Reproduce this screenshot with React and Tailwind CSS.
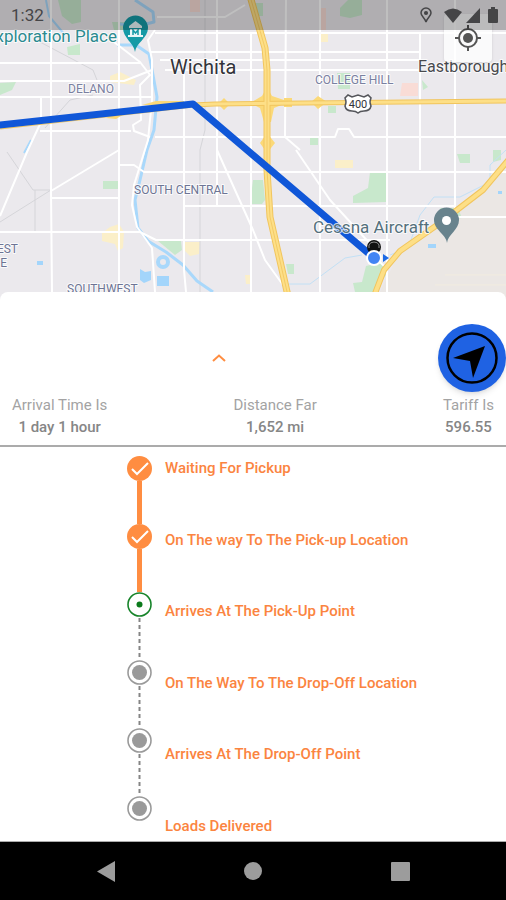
import { useState } from "react";
import clsx from "clsx";

const STATS = [
    { label: "Arrival Time Is", value: "1 day 1 hour" },
    { label: "Distance Far", value: "1,652 mi" },
    { label: "Tariff Is", value: "596.55" },
];

const STEPS = [
    { label: "Waiting For Pickup", status: "done" },
    { label: "On The way To The Pick-up Location", status: "done" },
    { label: "Arrives At The Pick-Up Point", status: "current" },
    { label: "On The Way To The Drop-Off Location", status: "pending" },
    { label: "Arrives At The Drop-Off Point", status: "pending" },
    { label: "Loads Delivered", status: "pending" },
];

const STREETS = [
    // east - west
    "M0 63H140", "M0 81H124L152 70", "M0 97H152", "M40 131H131", "M155 33H506", "M150 52H420", "M160 60H420",
    "M165 70H420", "M155 137H335L338 129H349L354 137H506", "M119 165H134L144 172H506", "M52 198H119",
    "M184 206H455", "M0 232H140L156 240H390", "M450 217H506", "M157 17H225L245 5",
    // north - south
    "M51 0V191L52 292", "M119 0V292", "M184 60V270L186 292", "M217 0V205", "M251 32V292", "M286 0L285 137L300 150",
    "M320 0V292", "M387 0V292", "M420 33V170", "M455 0V210",
    "M41 97V122L27 152L0 216", "M51 191L119 150", "M217 150L253 230L265 260L283 285", "M296 150L330 200L373 247",
    "M114 42L140 62L150 75L140 85L141 120L133 125L134 131L150 137",
    "M155 30L148 40L152 60V100L148 140L134 185L132 205L137 227L152 248L155 292", "M376 258L386 268",
];

const RAILS = [
    "M205 0V130L200 150V292", "M40 42L93 70L97 80", "M93 95L70 100L45 128", "M7 152L33 190L51 190",
    "M51 190L0 222", "M35 190V232",
];

const RIVER = "M135 0L153 12L154 22L138 26L120 24M117 45L136 45L149 54L153 75L157 97L154 130L147 150L140 180L135 200L138 228L148 241L166 252L183 265L197 281L213 292";

const PARKS = [
    "M58 0H81V22L72 24L62 16Z", "M67 47L80 44V55H68Z", "M0 83L16 82L12 90L0 95Z", "M112 22H126V30H114Z",
    "M340 8L348 0H362V15L350 18L340 16Z", "M103 181H118V189H103Z", "M158 241H181L182 250L175 255Z",
    "M253 180L263 180L265 200L262 204H250Z", "M370 172H386V202L353 203V196L368 188Z", "M457 154H470V163H460Z",
    "M493 150H501V160L493 162Z", "M337 73H350V89H338Z", "M422 80L428 87L423 90Z", "M366 266L382 262L388 272L374 292H355L353 283L362 282Z",
    "M328 106H336V113H328Z", "M310 138H318V145H310Z", "M286 264H294V274H288Z", "M440 208H458L462 218L446 220Z", "M253 3H263V16H254Z",
];

const SANDS = [
    "M102 233L110 227L119 224L124 232L123 248L118 251L115 244L102 241Z", "M184 242H200L199 254L190 256L184 250Z",
    "M110 76L120 72L136 80L134 85L110 82Z", "M335 160H353V168H335Z", "M320 34H328V42H320Z", "M245 275H251V284H246Z",
];

const LABELS = [
    { text: "Exploration Place", x: 117, y: 42, size: 17, anchor: "end", color: "#2c8a90" },
    { text: "Wichita", x: 170, y: 74, size: 20, color: "#33343a" },
    { text: "DELANO", x: 68, y: 93, size: 12, color: "#7a80a0" },
    { text: "COLLEGE HILL", x: 315, y: 84, size: 12, color: "#7a80a0" },
    { text: "Eastborough", x: 418, y: 72, size: 16, color: "#48494e" },
    { text: "SOUTH CENTRAL", x: 134, y: 194, size: 12, color: "#6d7494" },
    { text: "EST", x: 18, y: 253, size: 12, anchor: "end", color: "#6d7494" },
    { text: "E", x: 7, y: 267, size: 12, anchor: "end", color: "#6d7494" },
    { text: "SOUTHWEST", x: 67, y: 293, size: 12, color: "#6d7494" },
    { text: "Cessna Aircraft", x: 313, y: 233, size: 17, color: "#54707c" },
];

function RouteMap() {
    const route = "M-4 125.500L193 104L374 258";
    const freeway = "M250 -4L265 48L267 70V170L270 217L288 296";
    const diagonal = "M510 158L483 190L440 223L400 251L384 270L374 296";

    return (
        <svg viewBox="0 0 506 304" preserveAspectRatio="xMidYMid slice" className="block h-full w-full" aria-label="Route map">
            <rect width="506" height="304" fill="#ebe9ed" />
            <path d="M506 170L440 223L400 251L374 304H506Z" fill="#ebe7e4" />
            <g fill="#c8e8cc">{PARKS.map(d => <path key={d} d={d} />)}</g>
            <g fill="#fbefc9">{SANDS.map(d => <path key={d} d={d} />)}</g>
            <path d="M402 83H418V96H400ZM190 0H200V12H190ZM321 8H326V30H321Z" fill="#f9dcd6" />
            <g fill="none" stroke="#d5d5d9">{RAILS.map(d => <path key={d} d={d} />)}</g>
            <g fill="none" stroke="#a9d8fb" strokeLinejoin="round">
                <path d={RIVER} strokeWidth="3" />
                <path d="M46 0L49 16L65 35M31 140L24 153" strokeWidth="2" />
                <path d="M285 284H310L345 258L362 255M390 255L408 248L420 215L434 197H460L490 182V165L506 150" strokeWidth="1" stroke="#c2e0f5" />
                <circle cx="163" cy="262" r="5" strokeWidth="4" />
            </g>
            <path d="M140 269L145 272L151 271V280L144 283L140 280ZM157 276H169V286H157ZM37 261H43V265H37ZM428 244H436V248H428ZM498 191H502V194H498Z" fill="#a3d5fb" />
            <g fill="none" stroke="#ffffff" strokeWidth="2" strokeLinejoin="round">{STREETS.map(d => <path key={d} d={d} />)}</g>
            <path d="M445 275H506M435 285H506" stroke="#f2ecdf" />

            {/* Highways */}
            <g fill="#fbd978">
                <path d="M267 87L272 96L284 100V104L274 108L271 122H264L260 108L250 103L262 96Z" />
                <path d="M267 133L275 143L267 153L260 143ZM218 104L224 98L230 104L224 110ZM311 102L318 96L327 102L318 109ZM284 98H292V107H284Z" />
                <path d="M106 118L118 113H126L116 119ZM142 105L156 101H184V105Z" />
            </g>
            <g fill="none" strokeLinejoin="round">
                <g stroke="#f1c55e">
                    <path d="M0 127L193 105L215 104L506 101" strokeWidth="5" />
                    <path d={freeway} strokeWidth="7" />
                    <path d={diagonal} strokeWidth="6" />
                </g>
                <g stroke="#fddf87">
                    <path d="M0 127L193 105L215 104L506 101" strokeWidth="3" />
                    <path d={freeway} strokeWidth="5" />
                    <path d={diagonal} strokeWidth="4" />
                </g>
                <path d={freeway} stroke="#f3ca68" />
            </g>
            <path d={route} fill="none" stroke="#1057d8" strokeWidth="7" strokeLinejoin="round" />

            {/* Route shield */}
            <path d="M348 95L352 97L358 95L364 97L368 95L371 98Q369 102 371 106Q370 111 364 111Q360 111 358 113Q356 111 352 111Q346 111 345 106Q347 102 345 98Z" fill="#fff" stroke="#55565b" strokeWidth="1.500" />
            <text x="358" y="108" textAnchor="middle" fontFamily="Roboto, sans-serif" fontSize="11" fill="#33343a">400</text>

            <g fontFamily="Roboto, sans-serif" stroke="#ffffff" strokeOpacity="0.8" strokeWidth="2" strokeLinejoin="round" paintOrder="stroke">
                {LABELS.map(label => (
                    <text key={label.text} x={label.x} y={label.y} fontSize={label.size} textAnchor={label.anchor} fill={label.color}>
                        {label.text}
                    </text>
                ))}
            </g>

            {/* Museum pin */}
            <path d="M135 52C134 43 123 38 123 28A12.500 12.500 0 0 1 148 28C148 38 136 43 135 52Z" fill="#159aa6" />
            <path d="M135.500 21L142 26V28H129V26ZM130 29H141V35H143V37H128V35H130Z" fill="#e9f7f8" />
            <path d="M133 35V30L135.500 33L138 30V35" fill="none" stroke="#159aa6" strokeWidth="1.500" />

            {/* Aircraft pin */}
            <path d="M447 243C446 234 434 230 434 220A12.500 12.500 0 0 1 459 220C459 230 448 234 447 243Z" fill="#68838d" />
            <circle cx="446.500" cy="220.500" r="4.500" fill="#fff" />

            {/* Truck and current position */}
            <circle cx="374" cy="247" r="7" fill="#111" />
            <path d="M369 248V245Q370 242 374 242Q378 242 379 245V248" fill="none" stroke="#8d8d8d" />
            <path d="M383 254L389 258L383 262Z" fill="#1d6ae5" />
            <circle cx="374" cy="258" r="7" fill="#4285f4" stroke="#fff" strokeWidth="2" />
        </svg>
    );
}

function StatusBar() {
    return (
        <div className="absolute inset-x-0 top-0 flex h-[30px] items-center justify-between bg-black/25 pl-[11px] pr-2 text-[#454547]">
            <span className="text-[17px] leading-5">1:32</span>
            <div className="flex items-center">
                <svg width="12" height="16" viewBox="0 0 12 16" className="mr-3" fill="none" stroke="currentColor" strokeWidth="1.500">
                    <path d="M6 15C5 11 1 9 1 6A5 5 0 0 1 11 6C11 9 7 11 6 15Z" />
                    <circle cx="6" cy="6" r="1.300" fill="currentColor" />
                </svg>
                <svg width="18" height="15" viewBox="0 0 18 15" className="mr-1" fill="currentColor">
                    <path d="M0 4Q9 -3 18 4L9 15Z" />
                </svg>
                <svg width="14" height="15" viewBox="0 0 14 15" className="mr-2" fill="currentColor">
                    <path d="M14 0V15H0Z" />
                </svg>
                <svg width="10" height="16" viewBox="0 0 10 16" fill="currentColor">
                    <path d="M3 0H7V2H9Q10 2 10 3V15Q10 16 9 16H1Q0 16 0 15V3Q0 2 1 2H3Z" />
                </svg>
            </div>
        </div>
    );
}

function StepIcon({ status }) {
    return (
        <svg width="25" height="25" viewBox="0 0 25 25" className="block shrink-0" fill="none">
            {status === "done" && (
                <>
                    <circle cx="12.500" cy="12.500" r="12.500" fill="#ff8d41" />
                    <path d="M5 13L10 18L21 7" stroke="#fff" strokeWidth="2" />
                </>
            )}
            {status === "current" && (
                <>
                    <circle cx="12.500" cy="12.500" r="11.500" stroke="#17842a" strokeWidth="1.600" />
                    <circle cx="12.500" cy="12.500" r="3" fill="#0b7a1c" />
                </>
            )}
            {status === "pending" && (
                <>
                    <circle cx="12.500" cy="12.500" r="11.500" stroke="#9a9a9a" strokeWidth="1.600" />
                    <circle cx="12.500" cy="12.500" r="7.500" fill="#9a9a9a" />
                </>
            )}
        </svg>
    );
}

function Connector({ done }) {
    return (
        <svg width="5" height="43" viewBox="0 0 5 43" className="block shrink-0">
            {done ? (
                <path d="M2.500 0V43" stroke="#ff8d41" strokeWidth="5" />
            ) : (
                <path d="M2.500 1V43" stroke="#858585" strokeWidth="2" strokeDasharray="4 3" />
            )}
        </svg>
    );
}

export default function App() {
    const [expanded, setExpanded] = useState(true);

    return (
        <div className="flex min-h-screen flex-col bg-white font-['Roboto',sans-serif]">
            {/* Map */}
            <div className="relative h-[304px] shrink-0 overflow-hidden">
                <RouteMap />
                <button
                    type="button"
                    aria-label="My location"
                    className="absolute right-[14px] top-[14px] flex h-12 w-12 items-center justify-center rounded-sm bg-white/75 text-[#555] shadow-sm"
                >
                    <svg width="26" height="26" viewBox="0 0 26 26" fill="none" stroke="currentColor" strokeWidth="2">
                        <circle cx="13" cy="13" r="9" />
                        <circle cx="13" cy="13" r="5" fill="currentColor" stroke="none" />
                        <path d="M13 0V4M13 22V26M0 13H4M22 13H26" />
                    </svg>
                </button>
                <StatusBar />
            </div>

            {/* Trip sheet */}
            <main className="relative -mt-3 flex flex-1 flex-col rounded-t-lg bg-white">
                <div className="flex items-center pt-8">
                    <div className="flex flex-1 justify-center">
                        <button
                            type="button"
                            aria-label="Toggle trip details"
                            aria-expanded={expanded}
                            onClick={() => setExpanded(prev => !prev)}
                            className="flex h-6 w-6 items-center justify-center"
                        >
                            <svg width="14" height="8" viewBox="0 0 14 8" fill="none" stroke="#ff8d41" strokeWidth="2">
                                <path d="M1 7L7 1.500L13 7" />
                            </svg>
                        </button>
                    </div>
                    <button type="button" aria-label="Start navigation" className="h-[68px] w-[68px] rounded-full bg-[#1f62e3] shadow-md">
                        <svg width="68" height="68" viewBox="0 0 68 68" fill="none">
                            <circle cx="34" cy="34" r="24.500" stroke="#000" strokeWidth="2.500" />
                            <path d="M47 22L35 54L32 37L15 34Z" fill="#000" />
                        </svg>
                    </button>
                </div>

                <dl className="flex justify-between border-b-2 border-[#ababab] px-3 pb-[7px] pt-[2px] text-center text-[15px] leading-[22px]">
                    {STATS.map(stat => (
                        <div key={stat.label}>
                            <dt className="text-[#a3a3a3]">{stat.label}</dt>
                            <dd className="font-medium text-[#868686]">{stat.value}</dd>
                        </div>
                    ))}
                </dl>

                <div className={clsx("flex flex-1 gap-[13px] border-b border-[#ababab] pb-[5px] pl-[127px] pt-[9px]", !expanded && "hidden")}>
                    <div className="flex flex-col items-center" aria-hidden="true">
                        {STEPS.map((step, i) => (
                            <div key={step.label} className="flex flex-col items-center">
                                <StepIcon status={step.status} />
                                {i < STEPS.length - 1 && <Connector done={step.status === "done"} />}
                            </div>
                        ))}
                    </div>
                    <ol className="flex flex-col justify-between pt-[2px] text-[15px] font-medium leading-5 text-[#fb8440]">
                        {STEPS.map(step => (
                            <li key={step.label}>{step.label}</li>
                        ))}
                    </ol>
                </div>
            </main>

            {/* System navigation */}
            <nav className="grid h-[58px] shrink-0 grid-cols-[1fr_20px_1fr] items-center bg-black">
                <button type="button" aria-label="Back" className="mr-32 justify-self-end">
                    <svg width="18" height="21" viewBox="0 0 18 21" fill="#9c9c9c">
                        <path d="M18 0V21L0 10.500Z" />
                    </svg>
                </button>
                <button type="button" aria-label="Home" className="h-[18px] w-[18px] justify-self-center rounded-full bg-[#9c9c9c]" />
                <button type="button" aria-label="Recents" className="ml-32 h-[19px] w-[19px] rounded-[1px] bg-[#9c9c9c]" />
            </nav>
        </div>
    );
}
